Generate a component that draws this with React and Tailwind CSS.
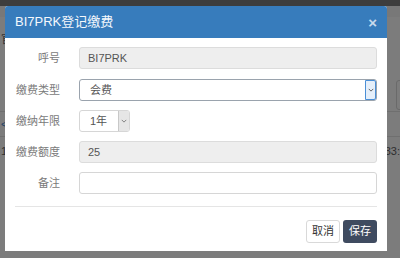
import React from "react";

const font = { fontFamily: '"Liberation Sans", "Noto Sans CJK SC", sans-serif' };

function Chevron({ className }) {
  return (
    <svg viewBox="0 0 8 5" className={className} fill="none" stroke="currentColor" strokeWidth="1.2">
      <path d="M1 1l3 3 3-3" />
    </svg>
  );
}

function Row({ label, children, className = "" }) {
  return (
    <div className={"flex items-center h-[22px] " + className}>
      <div className="w-[55px] text-right text-[11px] text-[#7a7a7a]">{label}</div>
      <div className="ml-[19px] flex-1 h-full">{children}</div>
    </div>
  );
}

export default function App() {
  return (
    <div className="relative w-[400px] h-[258px] overflow-hidden bg-[#7c7c7c]" style={font}>
      {/* dimmed page behind */}
      <div className="h-[6px] bg-[#3d3d3d]" />
      <div className="h-[11px] bg-[#787878]" />
      <div className="text-[11px] text-[#333] pl-[1px] mt-[14px]">官</div>
      <div className="mt-[63px] border-t border-[#6f6f6f]" />
      <div className="text-[10px] text-[#1e3f66] pl-[1px] mt-[8px] leading-none">&lt;</div>
      <div className="mt-[6px] border-t border-[#6f6f6f]" />
      <div className="flex justify-between text-[11px] text-[#2e2e2e] mt-[6px]">
        <span className="pl-[1px]">1</span>
        <span>33:</span>
      </div>
      <div className="absolute right-[-6px] top-[80px] w-[10px] h-[30px] rounded-[3px] border border-[#6a6a6a]" />

      {/* modal */}
      <div className="absolute left-[5px] top-[6px] w-[382px] h-[245px] bg-white rounded-t-[3px] overflow-hidden">
        <div className="h-[32px] bg-[#377cbc] flex items-center justify-between pl-[10px] pr-[10px]">
          <span className="text-[13px] text-[#f4f8fc]">BI7PRK登记缴费</span>
          <span className="text-[15px] font-bold text-[#c9daec] leading-none">×</span>
        </div>
        <div className="pt-[9px] pr-[10px]">
          <Row label="呼号">
            <div className="h-full rounded-[3px] border border-[#dcdcdc] bg-[#eeeeee] flex items-center pl-[8px] text-[11px] text-[#555]">
              BI7PRK
            </div>
          </Row>
          <Row label="缴费类型" className="mt-[10px]">
            <div className="h-full rounded-[3px] border border-[#9aa3ad] flex items-stretch text-[11px] text-[#555]">
              <div className="flex-1 flex items-center pl-[10px]">会费</div>
              <div className="w-[11px] bg-[#e5effa] border border-[#4b8fd6] rounded-r-[2px] flex items-center justify-center text-[#555]">
                <Chevron className="w-[6px] h-[4px]" />
              </div>
            </div>
          </Row>
          <Row label="缴纳年限" className="mt-[9px]">
            <div className="h-full w-[51px] rounded-[3px] border border-[#d6d6d6] flex items-stretch text-[11px] text-[#555]">
              <div className="flex-1 flex items-center pl-[10px]">1年</div>
              <div className="w-[11px] bg-[#e6e6e6] border-l border-[#c8c8c8] rounded-r-[2px] flex items-center justify-center text-[#777]">
                <Chevron className="w-[6px] h-[4px]" />
              </div>
            </div>
          </Row>
          <Row label="缴费额度" className="mt-[9px]">
            <div className="h-full rounded-[3px] border border-[#dcdcdc] bg-[#eeeeee] flex items-center pl-[8px] text-[11px] text-[#555]">
              25
            </div>
          </Row>
          <Row label="备注" className="mt-[9px]">
            <div className="h-full rounded-[3px] border border-[#d6d6d6] bg-white" />
          </Row>
        </div>
        <div className="mx-[10px] mt-[12px] border-t border-[#e5e5e5]" />
        <div className="flex justify-end gap-[3px] pr-[10px] mt-[13px]">
          <button className="w-[34px] h-[23px] rounded-[3px] border border-[#d9d9d9] bg-white text-[11px] text-[#333]">取消</button>
          <button className="w-[34px] h-[23px] rounded-[3px] bg-[#3f4b60] text-[11px] text-white">保存</button>
        </div>
      </div>
    </div>
  );
}
